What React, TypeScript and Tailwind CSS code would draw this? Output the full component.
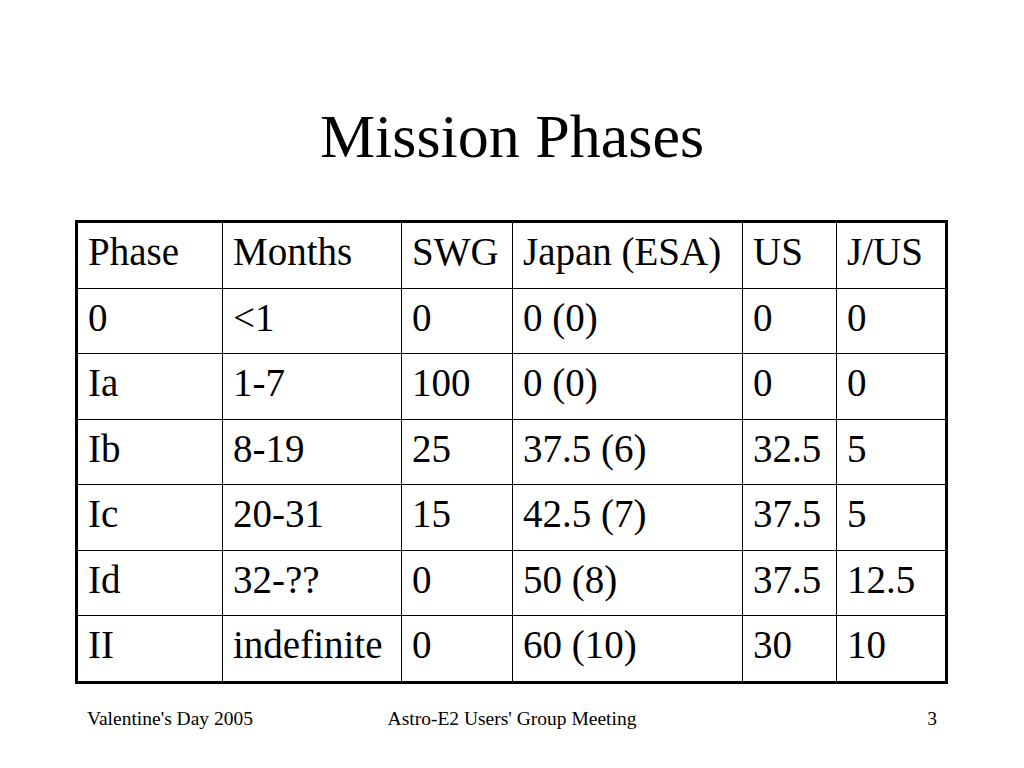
const header = ['Phase', 'Months', 'SWG', 'Japan (ESA)', 'US', 'J/US'];

const rows = [
  ['0', '<1', '0', '0 (0)', '0', '0'],
  ['Ia', '1-7', '100', '0 (0)', '0', '0'],
  ['Ib', '8-19', '25', '37.5 (6)', '32.5', '5'],
  ['Ic', '20-31', '15', '42.5 (7)', '37.5', '5'],
  ['Id', '32-??', '0', '50 (8)', '37.5', '12.5'],
  ['II', 'indefinite', '0', '60 (10)', '30', '10'],
];

function Cell({ text }: { text: string }) {
  return (
    <div className="bg-white pl-[10px] pt-[9px] text-[39px] leading-none whitespace-nowrap">
      {text}
    </div>
  );
}

export default function App() {
  return (
    <div className="flex h-[768px] w-[1024px] flex-col bg-white font-['Liberation_Serif','Times_New_Roman',serif] text-black">
      {/* Title */}
      <h1 className="mt-[105px] text-center text-[62px] leading-none font-normal">
        Mission Phases
      </h1>

      {/* Table */}
      <div className="mt-[53px] ml-[75px] w-[873px] border-[3px] border-black">
        <div className="grid h-[458px] grid-cols-[144px_178px_110px_229px_93px_108px] grid-rows-7 gap-px bg-black">
          {header.map((h) => (
            <Cell key={h} text={h} />
          ))}
          {rows.map((row, i) =>
            row.map((c, j) => <Cell key={`${i}-${j}`} text={c} />)
          )}
        </div>
      </div>

      {/* Footer */}
      <div className="mt-[25px] grid grid-cols-3 px-[87px] text-[19.5px] leading-none">
        <span className="text-left">Valentine's Day 2005</span>
        <span className="text-center">Astro-E2 Users' Group Meeting</span>
        <span className="text-right">3</span>
      </div>
    </div>
  );
}
